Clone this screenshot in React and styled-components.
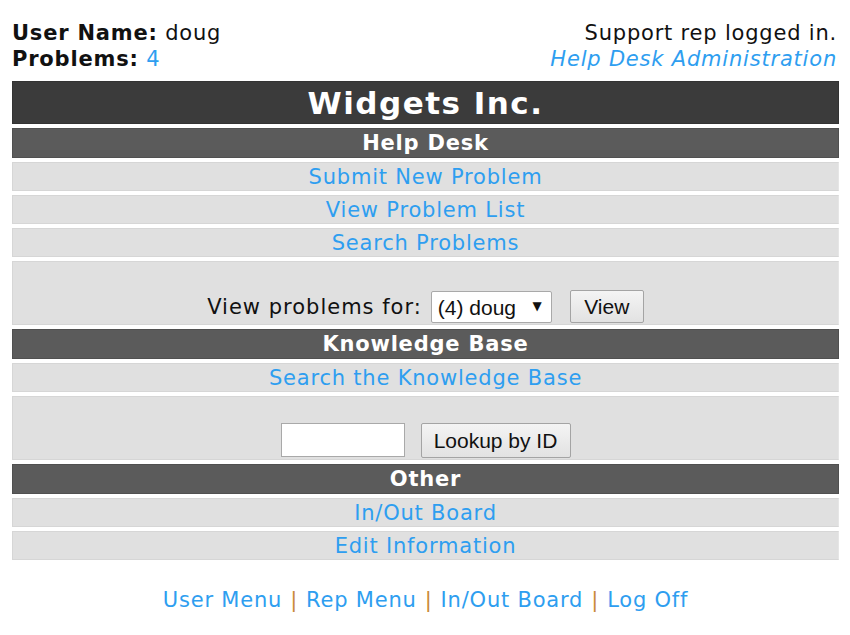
import React from 'react';
import styled, { createGlobalStyle } from 'styled-components';

const GlobalStyle = createGlobalStyle`
  body {
    margin: 0;
    background: #ffffff;
    font-family: "DejaVu Sans", Verdana, sans-serif;
    font-size: 21px;
    letter-spacing: 0.8px;
    color: #111111;
  }
`;

const Page = styled.div`
  padding: 20px 11px 0 12px;
`;

const TopBar = styled.div`
  display: flex;
  justify-content: space-between;
  line-height: 26px;
  margin-bottom: 9px;
`;

const Side = styled.div`
  text-align: ${(p) => (p.right ? 'right' : 'left')};
  margin-right: ${(p) => (p.right ? '2px' : '0')};
`;

const Label = styled.b`
  font-weight: bold;
`;

const Link = styled.a`
  color: #2e9ef0;
  text-decoration: none;
  font-style: ${(p) => (p.italic ? 'italic' : 'normal')};
  cursor: pointer;
`;

const Menu = styled.div`
  display: flex;
  flex-direction: column;
  gap: 4px;
`;

const TitleRow = styled.div`
  height: 43px;
  background: #3b3b3b;
  color: #ffffff;
  font-size: 31px;
  letter-spacing: 1.5px;
  font-weight: bold;
  display: flex;
  align-items: center;
  justify-content: center;
  border: 1px solid #333333;
  box-sizing: border-box;
`;

const SectionRow = styled.div`
  height: 30px;
  background: #5b5b5b;
  color: #ffffff;
  font-weight: bold;
  display: flex;
  align-items: center;
  justify-content: center;
  border: 1px solid #505050;
  box-sizing: border-box;
`;

const LinkRow = styled.div`
  height: ${(p) => (p.tall ? '64px' : '29px')};
  background: #e0e0e0;
  display: flex;
  align-items: ${(p) => (p.tall ? 'flex-end' : 'center')};
  justify-content: center;
  padding-bottom: ${(p) => (p.tall ? '1px' : '0')};
  border: 1px solid #d6d6d6;
  border-right-color: #e6e6e6;
  box-sizing: border-box;
`;

const FormText = styled.span`
  margin-right: 9px;
  margin-bottom: 4px;
  letter-spacing: 1px;
`;

const SelectWrap = styled.div`
  position: relative;
  width: 121px;
  height: 32px;
  margin-right: 18px;
`;

const Select = styled.select`
  appearance: none;
  width: 100%;
  height: 100%;
  background: #ffffff;
  border: 1px solid #a9a9a9;
  border-radius: 2px;
  font-family: "Liberation Sans", Arial, sans-serif;
  font-size: 21px;
  letter-spacing: 0;
  padding: 0 0 0 6px;
  color: #111111;
`;

const Arrow = styled.span`
  position: absolute;
  right: 10px;
  top: 8px;
  font-size: 12px;
  letter-spacing: 0;
  color: #111111;
  pointer-events: none;
`;

const Button = styled.button`
  height: ${(p) => p.h || 33}px;
  width: ${(p) => p.w}px;
  background: linear-gradient(#f4f4f4, #e2e2e2);
  border: 1px solid #a4a4a4;
  border-radius: 2px;
  font-family: "Liberation Sans", Arial, sans-serif;
  font-size: 21px;
  letter-spacing: 0;
  color: #111111;
  padding: 0;
`;

const TextInput = styled.input`
  width: 124px;
  height: 34px;
  box-sizing: border-box;
  border: 1px solid #a9a9a9;
  background: #ffffff;
  margin-right: 16px;
  margin-bottom: 1px;
`;

const Footer = styled.div`
  text-align: center;
  margin-top: 28px;
`;

const Pipe = styled.span`
  color: #c98a3a;
  margin: 0 8px;
`;

export default function App() {
  const helpLinks = ['Submit New Problem', 'View Problem List', 'Search Problems'];
  const footerLinks = ['User Menu', 'Rep Menu', 'In/Out Board', 'Log Off'];
  return (
    <Page>
      <GlobalStyle />
      <TopBar>
        <Side>
          <div>
            <Label>User Name:</Label> doug
          </div>
          <div>
            <Label>Problems:</Label> <Link>4</Link>
          </div>
        </Side>
        <Side right>
          <div>Support rep logged in.</div>
          <Link italic>Help Desk Administration</Link>
        </Side>
      </TopBar>
      <Menu>
        <TitleRow>Widgets Inc.</TitleRow>
        <SectionRow>Help Desk</SectionRow>
        {helpLinks.map((t) => (
          <LinkRow key={t}>
            <Link>{t}</Link>
          </LinkRow>
        ))}
        <LinkRow tall>
          <FormText>View problems for:</FormText>
          <SelectWrap>
            <Select defaultValue="doug">
              <option value="doug">(4) doug</option>
            </Select>
            <Arrow>▼</Arrow>
          </SelectWrap>
          <Button w={74} h={33}>View</Button>
        </LinkRow>
        <SectionRow>Knowledge Base</SectionRow>
        <LinkRow>
          <Link>Search the Knowledge Base</Link>
        </LinkRow>
        <LinkRow tall>
          <TextInput type="text" />
          <Button w={150} h={35}>Lookup by ID</Button>
        </LinkRow>
        <SectionRow>Other</SectionRow>
        <LinkRow>
          <Link>In/Out Board</Link>
        </LinkRow>
        <LinkRow>
          <Link>Edit Information</Link>
        </LinkRow>
      </Menu>
      <Footer>
        {footerLinks.map((t, i) => (
          <React.Fragment key={t}>
            {i > 0 && <Pipe>|</Pipe>}
            <Link>{t}</Link>
          </React.Fragment>
        ))}
      </Footer>
    </Page>
  );
}
